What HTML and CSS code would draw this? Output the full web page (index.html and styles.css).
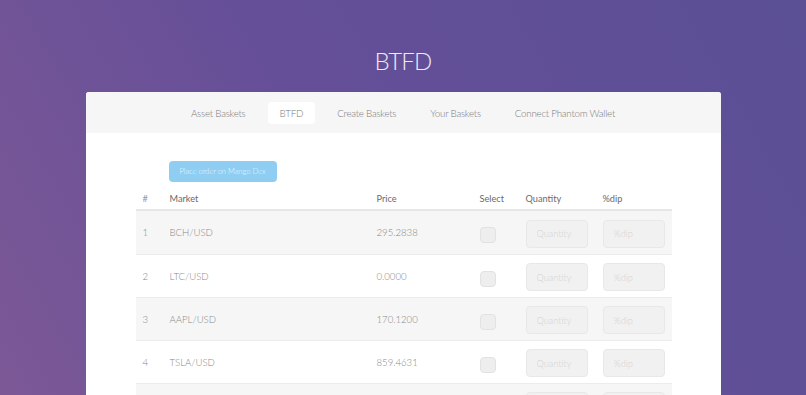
FILE: index.html
```html
<!DOCTYPE html>
<html>
<head>
<meta charset="utf-8">
<link rel="stylesheet" href="styles.css">
</head>
<body>
<div class="page">
  <h1 class="title">BTFD</h1>
  <div class="card">
    <nav class="nav">
      <a class="nav-item">Asset Baskets</a>
      <a class="nav-item active">BTFD</a>
      <a class="nav-item">Create Baskets</a>
      <a class="nav-item">Your Baskets</a>
      <a class="nav-item">Connect Phantom Wallet</a>
    </nav>
    <div class="content">
      <button class="order-btn">Place order on Mango Dex</button>
      <table class="markets">
        <colgroup>
          <col class="c-num"><col class="c-market"><col class="c-price"><col class="c-select"><col class="c-qty"><col class="c-dip">
        </colgroup>
        <thead>
          <tr><th class="hash">#</th><th>Market</th><th>Price</th><th>Select</th><th>Quantity</th><th>%dip</th></tr>
        </thead>
        <tbody>
          <tr class="odd"><td>1</td><td>BCH/USD</td><td>295.2838</td><td><span class="check"></span></td><td><input class="field" placeholder="Quantity"></td><td><input class="field" placeholder="%dip"></td></tr>
          <tr><td>2</td><td>LTC/USD</td><td>0.0000</td><td><span class="check"></span></td><td><input class="field" placeholder="Quantity"></td><td><input class="field" placeholder="%dip"></td></tr>
          <tr class="odd"><td>3</td><td>AAPL/USD</td><td>170.1200</td><td><span class="check"></span></td><td><input class="field" placeholder="Quantity"></td><td><input class="field" placeholder="%dip"></td></tr>
          <tr><td>4</td><td>TSLA/USD</td><td>859.4631</td><td><span class="check"></span></td><td><input class="field" placeholder="Quantity"></td><td><input class="field" placeholder="%dip"></td></tr>
          <tr class="odd"><td></td><td></td><td></td><td></td><td><span class="field stub"></span></td><td><span class="field stub"></span></td></tr>
        </tbody>
      </table>
    </div>
  </div>
</div>
</body>
</html>
```

FILE: styles.css
```css
html, body {
  margin: 0;
  padding: 0;
  height: 100%;
  overflow: hidden;
}
body {
  font-family: Lato, "Open Sans", sans-serif;
  background: linear-gradient(60deg, #7c5896 0%, #654f98 45%, #5b4f96 100%);
}
.page {
  display: flex;
  flex-direction: column;
  align-items: center;
  padding-top: 45px;
}
.title {
  margin: 0 0 15px;
  font-size: 24px;
  line-height: 32px;
  font-weight: 300;
  color: #eee9f6;
  letter-spacing: -0.8px;
}
.card {
  width: 635px;
  background: #fff;
  border-radius: 3px 3px 0 0;
  height: 400px;
}
.nav {
  display: flex;
  justify-content: center;
  align-items: center;
  gap: 10px;
  height: 41px;
  background: #f6f6f6;
  border-radius: 3px 3px 0 0;
}
.nav-item {
  padding: 0 12px;
  height: 22px;
  line-height: 22px;
  font-size: 9.8px;
  font-weight: 300;
  letter-spacing: -0.25px;
  color: #7a7a7a;
  border-radius: 4px;
}
.nav-item.active {
  background: #fff;
}
.content {
  padding: 28px 49px 0 50px;
}
.order-btn {
  display: block;
  margin-left: 33px;
  width: 108px;
  height: 21px;
  border: 0;
  border-radius: 4px;
  background: #8fcdf2;
  color: #eef8fe;
  font-family: Lato, sans-serif;
  font-size: 7.5px;
  font-weight: 300;
  padding: 0;
}
.markets {
  width: 536px;
  table-layout: fixed;
  border-collapse: collapse;
  margin-top: 5px;
}
.c-num { width: 27px; }
.c-market { width: 207px; }
.c-price { width: 103px; }
.c-select { width: 46px; }
.c-qty { width: 77px; }
.c-dip { width: 76px; }
.markets th {
  text-align: left;
  font-size: 9.2px;
  font-weight: 400;
  color: #6a6a6a;
  padding: 0 0 0 7px;
  height: 22px;
  border-bottom: 2px solid #e6e6e6;
}
.markets th.hash { color: #999; }
.markets td {
  height: 42px;
  padding: 0 0 0 7px;
  font-size: 9.6px;
  font-weight: 300;
  color: #888;
  border-top: 1px solid #ececec;
  vertical-align: middle;
}
.markets tbody tr:first-child td { border-top: 0; height: 43px; }
.markets tr.odd td { background: #f6f6f6; }
.check {
  display: block;
  width: 14px;
  height: 14px;
  margin-top: 5px;
  border: 1px solid #e2e2e2;
  border-radius: 4px;
  background: #eeeeee;
}
.field {
  box-sizing: border-box;
  width: 62px;
  height: 28px;
  border: 1px solid #e8e8e8;
  border-radius: 4px;
  background: #f1f1f1;
  padding: 0 0 0 10px;
  font-family: Lato, sans-serif;
  font-size: 9.2px;
  font-weight: 300;
  display: block;
  margin-top: 2px;
}
.field::placeholder { color: #d2d2d2; }
```
